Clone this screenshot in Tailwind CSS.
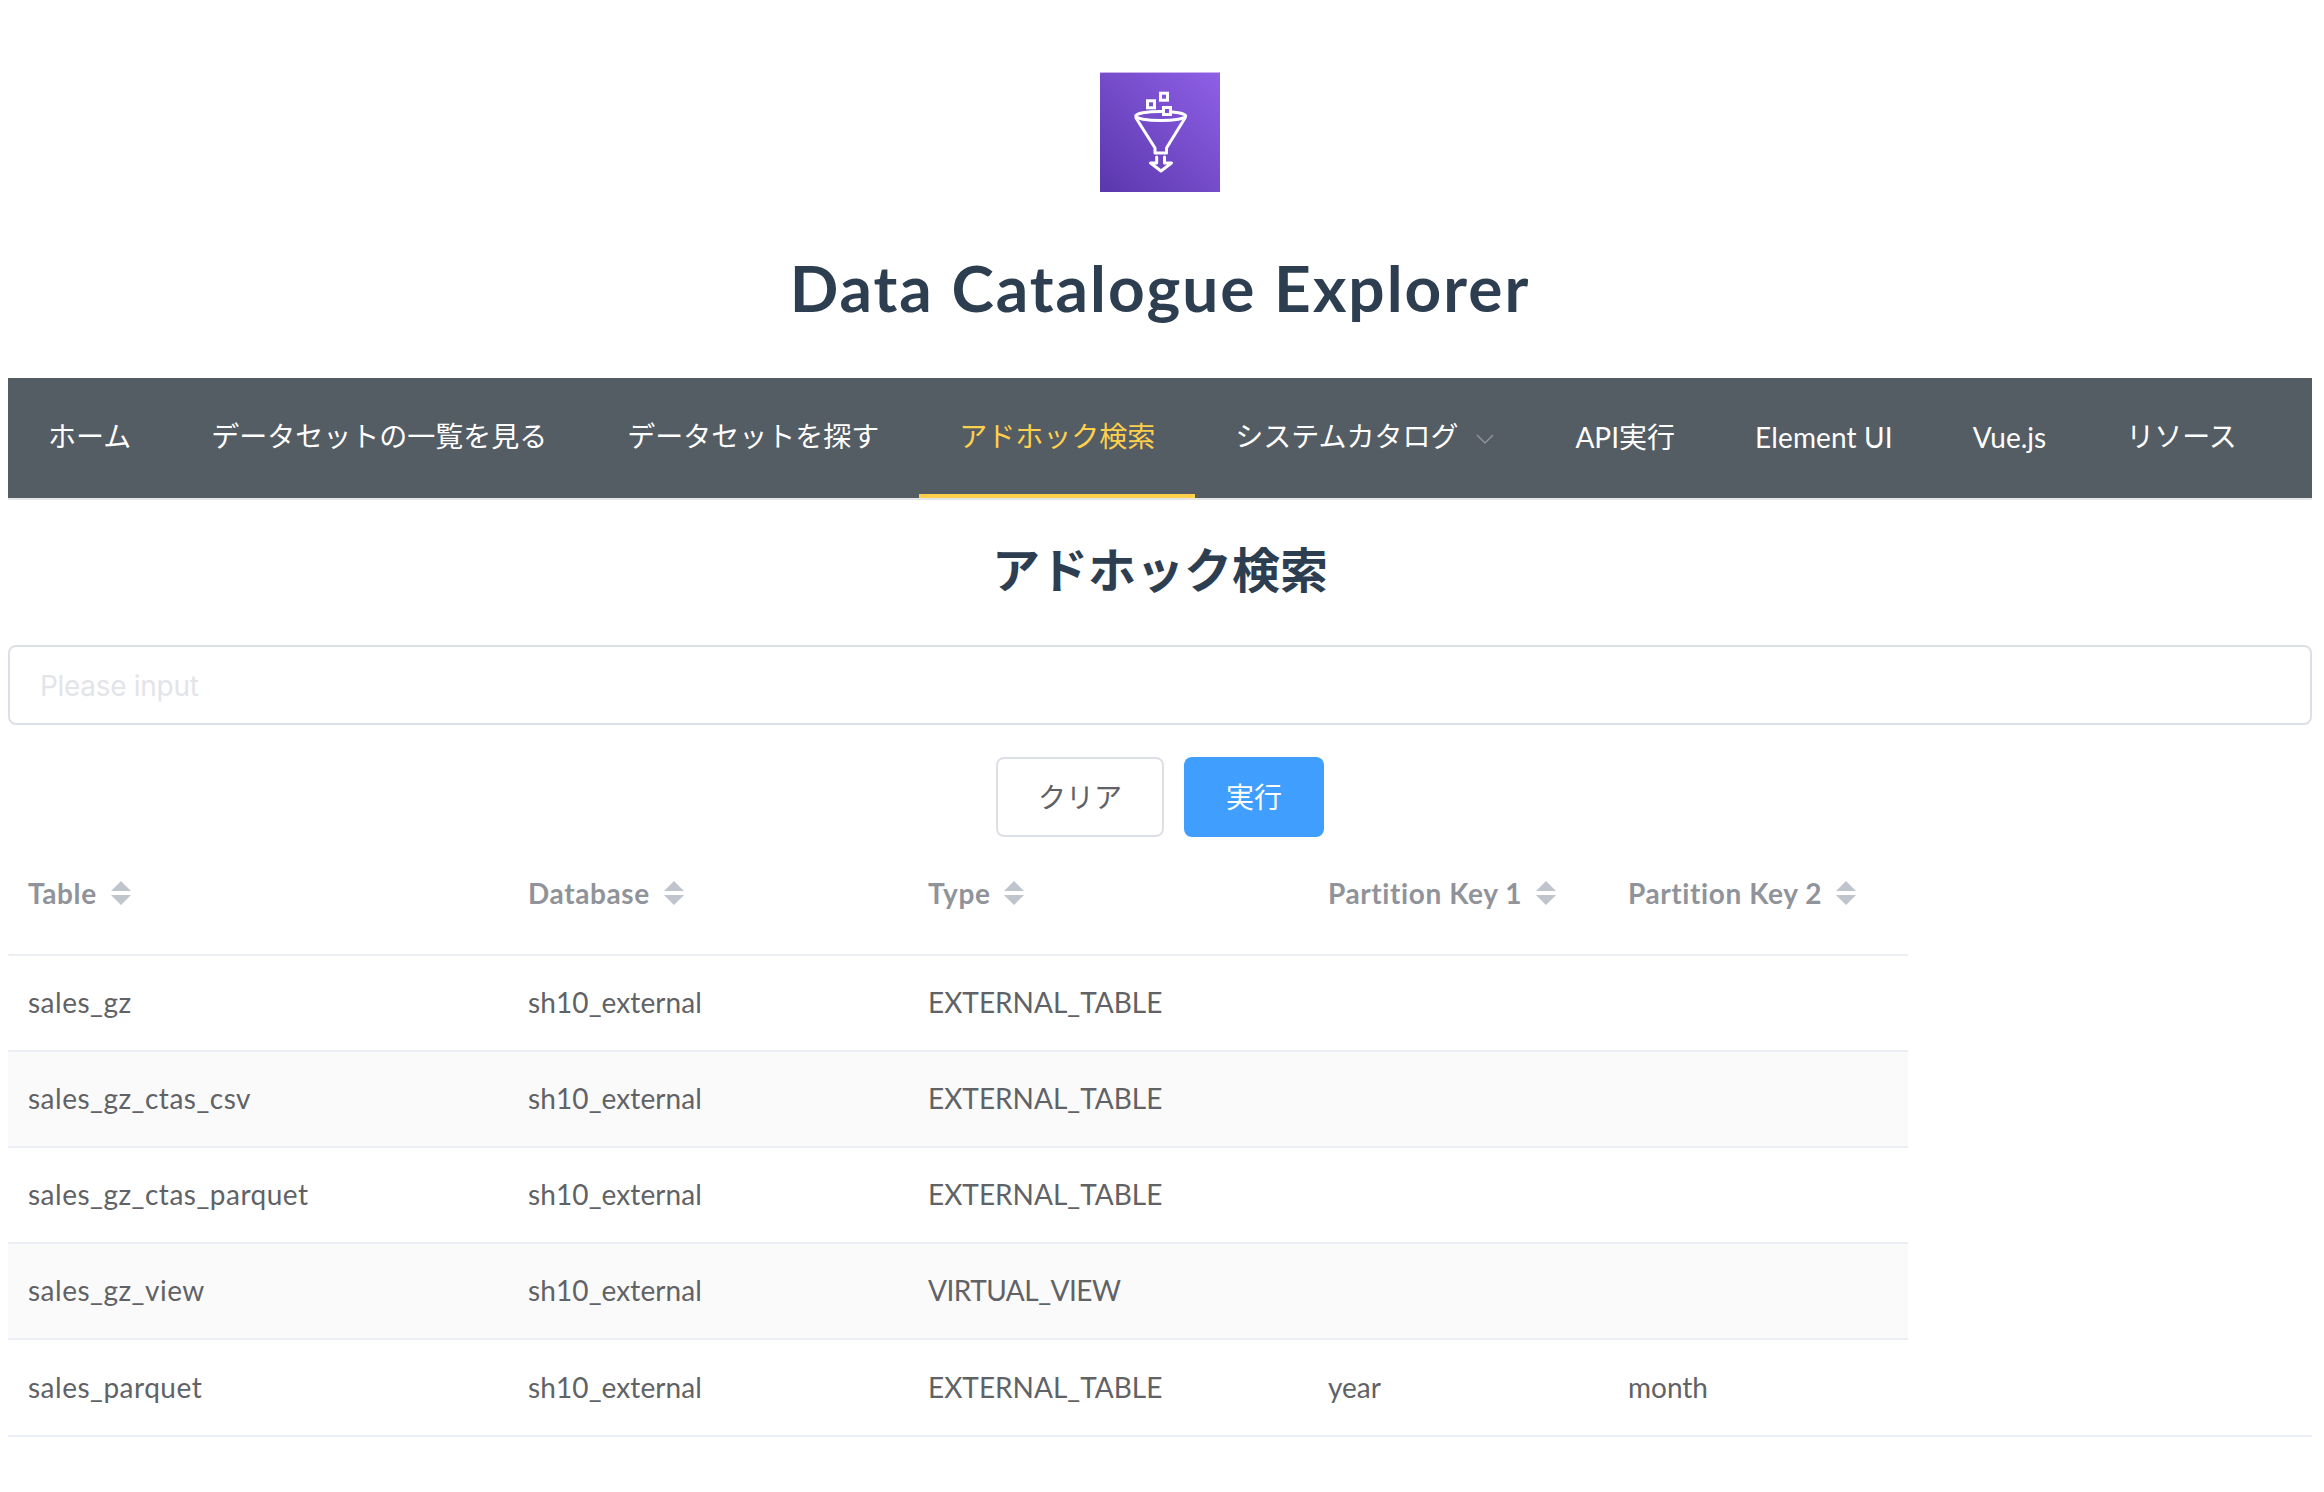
<!DOCTYPE html>
<html lang="ja">
<head>
<meta charset="utf-8">
<script src="https://cdn.jsdelivr.net/npm/@tailwindcss/browser@4"></script>
<title>Data Catalogue Explorer</title>
</head>
<body class="bg-white font-['Lato','Noto_Sans_CJK_JP',sans-serif] text-[#2c3e50]">
<div class="pl-2 pr-3">
  <div class="flex flex-col items-center pt-[72px]">
    <svg class="block" width="120" height="120" viewBox="0 0 120 120">
      <defs>
        <linearGradient id="g" x1="0" y1="1" x2="1" y2="0">
          <stop offset="0" stop-color="#5a37ad"/>
          <stop offset="1" stop-color="#8f60e6"/>
        </linearGradient>
      </defs>
      <rect width="120" height="120" fill="url(#g)"/>
      <rect width="120" height="1" fill="#c9b2f0"/>
      <g fill="none" stroke="#fff" stroke-width="3" stroke-linejoin="round" stroke-linecap="round">
        <ellipse cx="60.7" cy="44" rx="25" ry="4.5"/>
        <path d="M36 46 L55 76 V81 H66.5 V76 L85 46"/>
        <path d="M56.7 85 V91 H50.5 L61 99 L71.5 91 H64.5 V85"/>
        <rect x="47.5" y="28.8" width="7" height="7" stroke-linejoin="miter"/>
        <rect x="60.5" y="21.2" width="7" height="7" stroke-linejoin="miter"/>
        <rect x="63.5" y="35.5" width="7" height="7" fill="#7a4fd0" stroke-linejoin="miter"/>
      </g>
    </svg>
    <h1 class="mt-[48px] text-[64px] leading-[96px] font-bold tracking-[2px]">Data Catalogue Explorer</h1>
  </div>

  <nav class="mt-[42px] flex h-[122px] items-stretch border-b-2 border-[#e6e6e6] bg-[#545c64] text-[28px] text-white">
    <a class="flex items-center px-10 pb-[4px]">ホーム</a>
    <a class="flex items-center px-10 pb-[4px]">データセットの一覧を見る</a>
    <a class="flex items-center px-10 pb-[4px]">データセットを探す</a>
    <a class="flex items-center border-b-4 border-[#ffd04b] px-10 text-[#ffd04b]">アドホック検索</a>
    <a class="flex items-center px-10 pb-[4px]">システムカタログ
      <svg class="ml-[17px] mt-[6px]" width="20" height="12" viewBox="0 0 20 12" fill="none" stroke="#909399" stroke-width="1.5"><path d="M2 2 L10 10 L18 2"/></svg>
    </a>
    <a class="flex items-center px-10 pb-[2px]">API実行</a>
    <a class="flex items-center px-10 pb-[2px] tracking-[0.15px]">Element UI</a>
    <a class="flex items-center px-10 pb-[2px]">Vue.js</a>
    <a class="flex items-center px-10 pb-[4px]">リソース</a>
  </nav>

  <h2 class="mt-[34px] text-center text-[48px] leading-[72px] font-bold">アドホック検索</h2>

  <input class="mt-[39px] block h-[80px] w-full rounded-lg border-2 border-[#dcdfe6] px-[30px] pt-[2px] font-['Inter',sans-serif] text-[28px] tracking-[-0.3px] text-[#606266] outline-none placeholder:text-[#e3e4ea]" placeholder="Please input">

  <div class="mt-[32px] flex justify-center gap-[20px] text-[28px]">
    <button class="h-[80px] w-[168px] rounded-lg border-2 border-[#dcdfe6] bg-white text-[#606266]">クリア</button>
    <button class="h-[80px] w-[140px] rounded-lg bg-[#409eff] text-white">実行</button>
  </div>

  <table class="w-[1900px] table-fixed border-collapse text-[28px] text-[#606266]">
    <colgroup>
      <col class="w-[500px]"><col class="w-[400px]"><col class="w-[400px]"><col class="w-[300px]"><col class="w-[300px]">
    </colgroup>
    <thead>
      <tr class="h-[118px] border-b-2 border-[#ebeef5] text-left text-[#909399]">
        <th class="px-5 pb-[6px] font-bold tracking-[0.6px]"><span class="inline-flex items-center gap-[14px]">Table <svg width="20" height="24" viewBox="0 0 20 24" fill="#c0c4cc"><path d="M10 0 L20 10 H0Z M0 14 H20 L10 24Z"/></svg></span></th>
        <th class="px-5 pb-[6px] font-bold tracking-[0.6px]"><span class="inline-flex items-center gap-[14px]">Database <svg width="20" height="24" viewBox="0 0 20 24" fill="#c0c4cc"><path d="M10 0 L20 10 H0Z M0 14 H20 L10 24Z"/></svg></span></th>
        <th class="px-5 pb-[6px] font-bold tracking-[0.6px]"><span class="inline-flex items-center gap-[14px]">Type <svg width="20" height="24" viewBox="0 0 20 24" fill="#c0c4cc"><path d="M10 0 L20 10 H0Z M0 14 H20 L10 24Z"/></svg></span></th>
        <th class="px-5 pb-[6px] font-bold tracking-[0.6px]"><span class="inline-flex items-center gap-[14px]">Partition Key 1 <svg width="20" height="24" viewBox="0 0 20 24" fill="#c0c4cc"><path d="M10 0 L20 10 H0Z M0 14 H20 L10 24Z"/></svg></span></th>
        <th class="px-5 pb-[6px] font-bold tracking-[0.6px]"><span class="inline-flex items-center gap-[14px]">Partition Key 2 <svg width="20" height="24" viewBox="0 0 20 24" fill="#c0c4cc"><path d="M10 0 L20 10 H0Z M0 14 H20 L10 24Z"/></svg></span></th>
      </tr>
    </thead>
    <tbody>
      <tr class="h-[96px] border-b-2 border-[#ebeef5]"><td class="px-5 pb-[2px] tracking-[0.5px]">sales_gz</td><td class="px-5 pb-[2px] tracking-[0.1px]">sh10_external</td><td class="px-5 pb-[2px]">EXTERNAL_TABLE</td><td class="px-5"></td><td class="px-5"></td></tr>
      <tr class="h-[96px] border-b-2 border-[#ebeef5] bg-[#fafafa]"><td class="px-5 pb-[2px] tracking-[0.5px]">sales_gz_ctas_csv</td><td class="px-5 pb-[2px] tracking-[0.1px]">sh10_external</td><td class="px-5 pb-[2px]">EXTERNAL_TABLE</td><td class="px-5"></td><td class="px-5"></td></tr>
      <tr class="h-[96px] border-b-2 border-[#ebeef5]"><td class="px-5 pb-[2px] tracking-[0.5px]">sales_gz_ctas_parquet</td><td class="px-5 pb-[2px] tracking-[0.1px]">sh10_external</td><td class="px-5 pb-[2px]">EXTERNAL_TABLE</td><td class="px-5"></td><td class="px-5"></td></tr>
      <tr class="h-[96px] border-b-2 border-[#ebeef5] bg-[#fafafa]"><td class="px-5 pb-[2px] tracking-[0.5px]">sales_gz_view</td><td class="px-5 pb-[2px] tracking-[0.1px]">sh10_external</td><td class="px-5 pb-[2px] tracking-[-0.5px]">VIRTUAL_VIEW</td><td class="px-5"></td><td class="px-5"></td></tr>
      <tr class="h-[96px]"><td class="px-5 pb-[2px] tracking-[0.5px]">sales_parquet</td><td class="px-5 pb-[2px] tracking-[0.1px]">sh10_external</td><td class="px-5 pb-[2px]">EXTERNAL_TABLE</td><td class="px-5 pb-[2px]">year</td><td class="px-5 pb-[2px]">month</td></tr>
    </tbody>
  </table>
  <div class="h-[2px] w-full bg-[#ebeef5]"></div>
</div>
</body>
</html>
